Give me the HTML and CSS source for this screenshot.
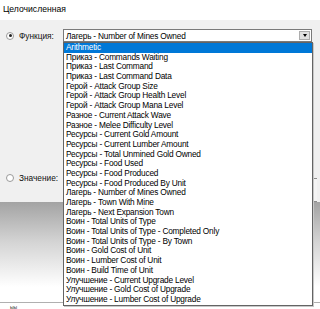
FILE: index.html
```html
<!DOCTYPE html>
<html lang="ru">
<head>
    <meta charset="UTF-8">
    <title>Целочисленная</title>
    <link rel="stylesheet" href="styles.css">
</head>
<body>
    <div class="title">Целочисленная</div>
    <div class="panel">
        <div class="row row-func">
            <span class="radio checked"></span>
            <span class="label">Функция:</span>
            <div class="combo">
                <span class="combo-text">Лагерь - Number of Mines Owned</span>
                <span class="combo-btn"><span class="arrow"></span></span>
            </div>
        </div>
        <div class="row row-value">
            <span class="radio"></span>
            <span class="label">Значение:</span>
        </div>
    </div>
    <div class="shade">
        <div class="thumb"></div>
    </div>
    <div class="footer"><span class="footer-text">ыы</span></div>

    <ul class="dropdown">
        <li class="selected">Arithmetic</li>
        <li>Приказ - Commands Waiting</li>
        <li>Приказ - Last Command</li>
        <li>Приказ - Last Command Data</li>
        <li>Герой - Attack Group Size</li>
        <li>Герой - Attack Group Health Level</li>
        <li>Герой - Attack Group Mana Level</li>
        <li>Разное - Current Attack Wave</li>
        <li>Разное - Melee Difficulty Level</li>
        <li>Ресурсы - Current Gold Amount</li>
        <li>Ресурсы - Current Lumber Amount</li>
        <li>Ресурсы - Total Unmined Gold Owned</li>
        <li>Ресурсы - Food Used</li>
        <li>Ресурсы - Food Produced</li>
        <li>Ресурсы - Food Produced By Unit</li>
        <li>Лагерь - Number of Mines Owned</li>
        <li>Лагерь - Town With Mine</li>
        <li>Лагерь - Next Expansion Town</li>
        <li>Воин - Total Units of Type</li>
        <li>Воин - Total Units of Type - Completed Only</li>
        <li>Воин - Total Units of Type - By Town</li>
        <li>Воин - Gold Cost of Unit</li>
        <li>Воин - Lumber Cost of Unit</li>
        <li>Воин - Build Time of Unit</li>
        <li>Улучшение - Current Upgrade Level</li>
        <li>Улучшение - Gold Cost of Upgrade</li>
        <li>Улучшение - Lumber Cost of Upgrade</li>
    </ul>
</body>
</html>
```

FILE: styles.css
```css
body {
    margin: 0;
    width: 320px;
    height: 309px;
    overflow: hidden;
    position: relative;
    background: #ffffff;
    font-family: "Liberation Sans", Arial, sans-serif;
    font-size: 8.3px;
    letter-spacing: -0.2px;
    color: #000;
}
.title {
    height: 20px;
    padding: 4px 0 0 3px;
    box-sizing: border-box;
    font-size: 8.6px;
    letter-spacing: 0;
}
.panel {
    height: 182px;
    background: #f0f0f0;
    position: relative;
}
.row {
    display: flex;
    align-items: center;
    padding-left: 6px;
}
.row-func {
    padding-top: 9px;
    height: 13px;
}
.row-value {
    margin-top: 131px;
}
.radio {
    width: 6px;
    height: 6px;
    border: 1px solid #9a9a9a;
    border-radius: 50%;
    background: #fff;
    position: relative;
    box-sizing: content-box;
}
.radio.checked::after {
    content: "";
    position: absolute;
    left: 1.5px;
    top: 1.5px;
    width: 3px;
    height: 3px;
    border-radius: 50%;
    background: #222;
}
.label {
    margin-left: 5px;
    width: 44px;
    color: #111;
    letter-spacing: 0;
}
.combo {
    display: flex;
    align-items: center;
    width: 249px;
    height: 13px;
    border: 1px solid #7a7a7a;
    background: #fff;
    box-sizing: border-box;
}
.combo-text {
    flex: 1;
    padding-left: 2px;
}
.combo-btn {
    width: 11px;
    height: 9px;
    margin-right: 1px;
    border: 1px solid #adadad;
    background: #e1e1e1;
    box-sizing: border-box;
    display: flex;
    align-items: center;
    justify-content: center;
}
.arrow {
    width: 0;
    height: 0;
    border-left: 2.5px solid transparent;
    border-right: 2.5px solid transparent;
    border-top: 3px solid #000;
}
.shade {
    height: 100px;
    background: linear-gradient(#a3a3a3, #d4d4d4 40%, #ffffff 85%);
    position: relative;
}
.thumb {
    position: absolute;
    right: 3px;
    top: -24px;
    width: 3px;
    height: 22px;
    border: 1px solid #8c8c8c;
    border-right: none;
    background: #f4f4f4;
}
.footer {
    height: 7px;
    border-top: 1px solid #b0b0b0;
    background: #fff;
    display: flex;
    align-items: center;
}
.footer-text {
    margin-left: 10px;
    font-size: 5px;
    line-height: 6px;
    color: #333;
}
.dropdown {
    position: absolute;
    left: 63px;
    top: 42px;
    width: 250px;
    margin: 0;
    padding: 0;
    list-style: none;
    background: #fff;
    border: 1px solid #646464;
    box-shadow: 1px 1px 0 #c8c8c8;
    box-sizing: border-box;
}
.dropdown li {
    height: 9.7px;
    line-height: 9.7px;
    padding-left: 2px;
    white-space: nowrap;
}
.dropdown li.selected {
    background: #0078d7;
    color: #fff;
}
```
